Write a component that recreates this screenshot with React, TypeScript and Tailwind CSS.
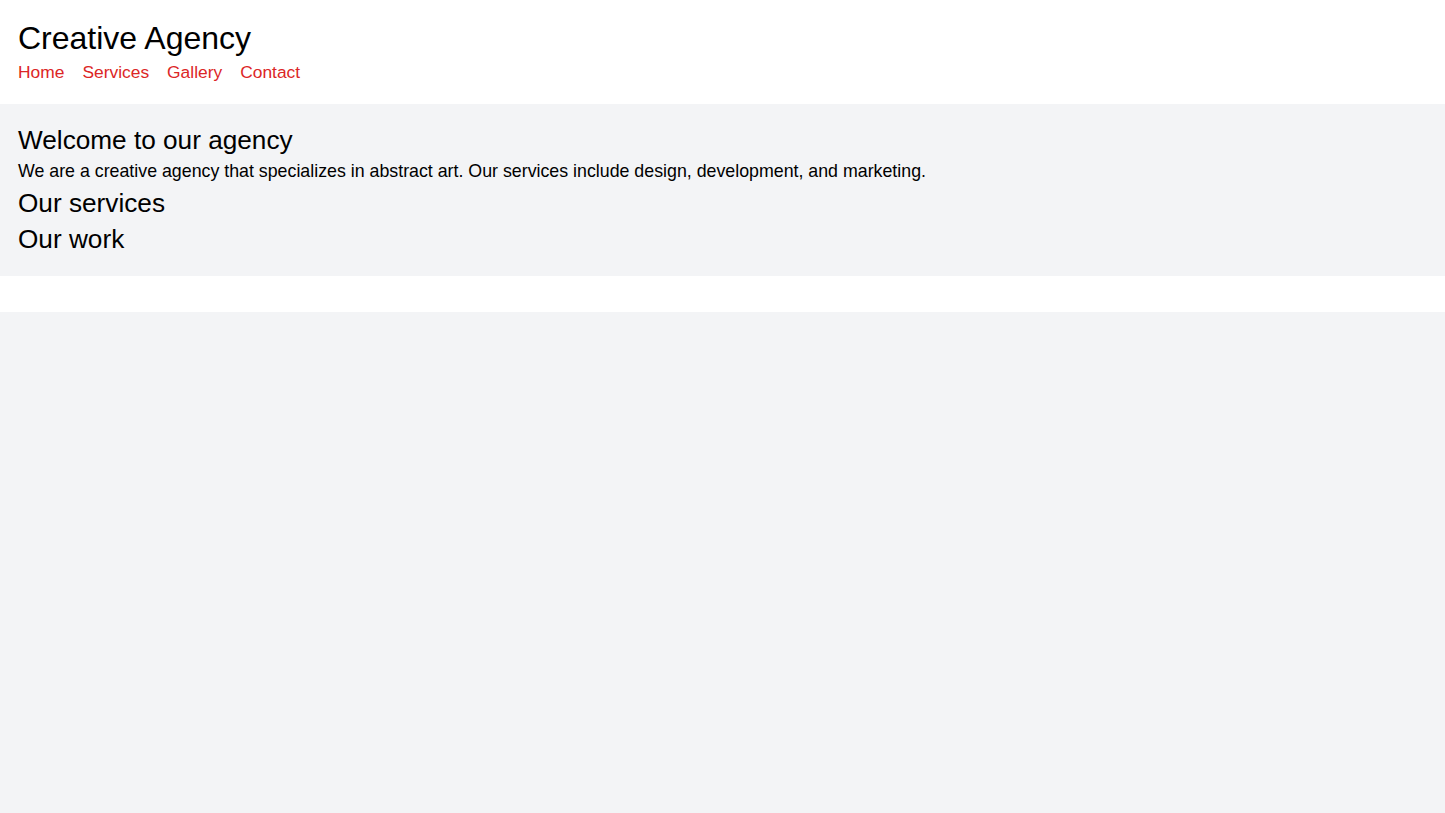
import React from "react";

const links = ["Home", "Services", "Gallery", "Contact"];

const App: React.FC = () => {
  return (
    <div className="min-h-screen bg-gray-100 text-black font-['Liberation_Sans',Arial,sans-serif]">
      <header className="bg-white p-[18px]">
        <h1 className="text-[32px] leading-[40.5px]">Creative Agency</h1>
        <nav className="flex gap-[18px] text-[17.4px] leading-[27px]">
          {links.map((l) => (
            <a key={l} href="#" className="text-[#dc2626]">
              {l}
            </a>
          ))}
        </nav>
      </header>

      <main className="px-[18px] pt-[18px] pb-[19px]">
        <h2 className="text-[26.2px] leading-[36px]">Welcome to our agency</h2>
        <p className="text-[17.8px] leading-[27px]">
          We are a creative agency that specializes in abstract art. Our services include design, development, and marketing.
        </p>
        <h2 className="text-[26.2px] leading-[36px]">Our services</h2>
        <h2 className="text-[26.2px] leading-[36px]">Our work</h2>
      </main>

      <footer className="h-[36px] bg-white" />
    </div>
  );
};

export default App;
